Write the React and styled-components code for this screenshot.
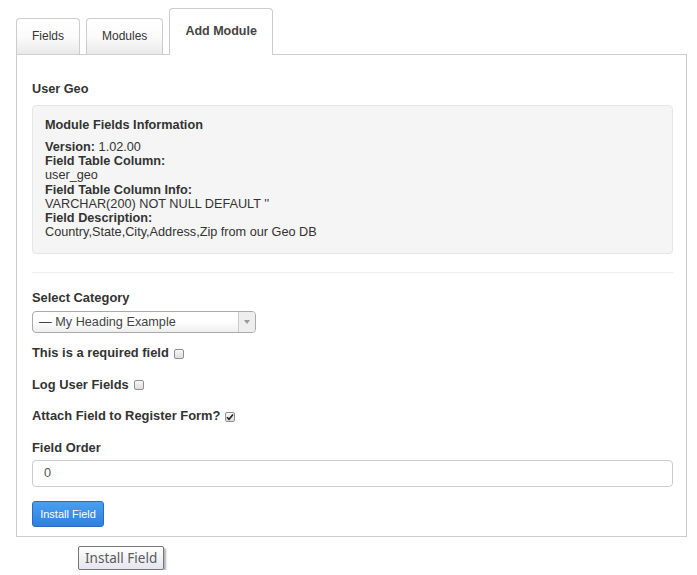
import React from 'react';
import styled, { createGlobalStyle } from 'styled-components';

const GlobalStyle = createGlobalStyle`
    body {
        margin: 0;
        background: #fff;
        font-family: "Liberation Sans", Arial, sans-serif;
        font-size: 12.7px;
        color: #333;
    }
`;

const Page = styled.div`
    padding: 8px 0 0 16px;
    width: 671px;
`;

const TabRow = styled.div`
    display: flex;
    align-items: flex-end;
    gap: 6px;
    position: relative;
    z-index: 1;
    margin-bottom: -1px;
`;

const Tab = styled.div`
    box-sizing: border-box;
    padding: 0 15px;
    border: 1px solid #ccc;
    border-bottom: none;
    border-radius: 4px 4px 0 0;
    line-height: 18px;
    color: ${p => (p.$active ? '#444' : '#333')};
    font-weight: ${p => (p.$active ? 'bold' : 'normal')};
    font-size: ${p => (p.$active ? '12.5px' : '12px')};
    height: ${p => (p.$active ? '47px' : '37px')};
    padding-top: ${p => (p.$active ? '13px' : '8px')};
    background: ${p => (p.$active ? '#fff' : 'linear-gradient(#fff 0%, #fbfbfb 50%, #e8e8e8 100%)')};
    box-shadow: ${p => (p.$active ? 'none' : 'inset 0 -1px 0 #d0d0d0')};
`;

const Panel = styled.div`
    border: 1px solid #ccc;
    padding: 25px 13px 9px 15px;
`;

const Title = styled.div`
    font-weight: bold;
    line-height: 18px;
    margin-bottom: 7px;
`;

const Well = styled.div`
    background: #f5f5f5;
    border: 1px solid #e6e6e6;
    border-radius: 4px;
    padding: 10px 12px 14px;
`;

const WellHeading = styled.div`
    font-weight: bold;
    line-height: 18px;
    margin-bottom: 6px;
`;

const InfoLine = styled.div`
    line-height: 14.2px;
    font-weight: ${p => (p.$bold ? 'bold' : 'normal')};
`;

const Divider = styled.hr`
    border: none;
    border-top: 1px solid #eee;
    margin: 18px 0 16px;
`;

const Label = styled.div`
    font-weight: bold;
    font-size: 12.9px;
    line-height: 18px;
    display: flex;
    align-items: center;
    gap: 5px;
    margin-bottom: ${p => p.$mb || '13.5px'};
`;

const Select = styled.div`
    box-sizing: border-box;
    width: 224px;
    height: 22px;
    border: 1px solid #aaa;
    border-radius: 4px;
    background: linear-gradient(#fff 0%, #fff 50%, #eee 100%);
    display: flex;
    align-items: center;
    margin-bottom: 11px;
    overflow: hidden;
`;

const SelectText = styled.div`
    flex: 1;
    padding-left: 6px;
    color: #444;
    line-height: 20px;
`;

const SelectArrow = styled.div`
    width: 16px;
    height: 100%;
    border-left: 1px solid #ccc;
    background: #eee;
    display: flex;
    align-items: center;
    justify-content: center;

    &::after {
        content: '';
        border-left: 3px solid transparent;
        border-right: 3px solid transparent;
        border-top: 4px solid #999;
    }
`;

const Box = styled.span`
    box-sizing: border-box;
    width: 10px;
    height: 10px;
    border: 1px solid #8f8f8f;
    border-radius: 2px;
    background: linear-gradient(#f6f6f6, #dedede);
    display: inline-flex;
    align-items: center;
    justify-content: center;
    margin-top: 1px;
`;

const Checkbox = ({ checked }) => (
    <Box>
        {checked && (
            <svg width="8" height="8" viewBox="0 0 8 8">
                <path d="M1 4.2 L3 6.3 L7 1.5" fill="none" stroke="#222" strokeWidth="1.6" />
            </svg>
        )}
    </Box>
);

const TextInput = styled.div`
    box-sizing: border-box;
    height: 27px;
    border: 1px solid #ccc;
    border-radius: 4px;
    padding: 0 11px;
    line-height: 25px;
    color: #555;
    margin: 3px 0 14px;
`;

const Button = styled.div`
    box-sizing: border-box;
    width: 72px;
    height: 26px;
    border: 1px solid #2a6bbd;
    border-radius: 3px;
    background: linear-gradient(#4a9ff0, #2f80e0);
    color: #fff;
    font-size: 11px;
    line-height: 24px;
    text-align: center;
`;

const Tooltip = styled.div`
    width: fit-content;
    box-sizing: border-box;
    height: 24px;
    margin: 9px 0 0 62px;
    padding: 0 6px;
    border: 1px solid #767676;
    border-radius: 2px;
    background: linear-gradient(#fff, #e4e5f0);
    box-shadow: 2px 2px 2px rgba(0, 0, 0, 0.3);
    font-family: "Noto Sans", "Open Sans", sans-serif;
    font-size: 13.5px;
    line-height: 22px;
    color: #5a5a5a;
    white-space: nowrap;
`;

const info = [
    { label: 'Version:', value: ' 1.02.00' },
    { bold: true, text: 'Field Table Column:' },
    { text: 'user_geo' },
    { bold: true, text: 'Field Table Column Info:' },
    { text: 'VARCHAR(200) NOT NULL DEFAULT \'\'' },
    { bold: true, text: 'Field Description:' },
    { text: 'Country,State,City,Address,Zip from our Geo DB' },
];

const App = () => (
    <>
        <GlobalStyle />
        <Page>
            <TabRow>
                <Tab>Fields</Tab>
                <Tab>Modules</Tab>
                <Tab $active>Add Module</Tab>
            </TabRow>
            <Panel>
                <Title>User Geo</Title>
                <Well>
                    <WellHeading>Module Fields Information</WellHeading>
                    {info.map((l, i) =>
                        l.label ? (
                            <InfoLine key={i}>
                                <b>{l.label}</b>{l.value}
                            </InfoLine>
                        ) : (
                            <InfoLine key={i} $bold={l.bold}>{l.text}</InfoLine>
                        )
                    )}
                </Well>
                <Divider />
                <Label $mb="4px">Select Category</Label>
                <Select>
                    <SelectText>— My Heading Example</SelectText>
                    <SelectArrow />
                </Select>
                <Label>This is a required field <Checkbox /></Label>
                <Label>Log User Fields <Checkbox /></Label>
                <Label>Attach Field to Register Form? <Checkbox checked /></Label>
                <Label $mb="0">Field Order</Label>
                <TextInput>0</TextInput>
                <Button>Install Field</Button>
            </Panel>
            <Tooltip>Install Field</Tooltip>
        </Page>
    </>
);

export default App;
